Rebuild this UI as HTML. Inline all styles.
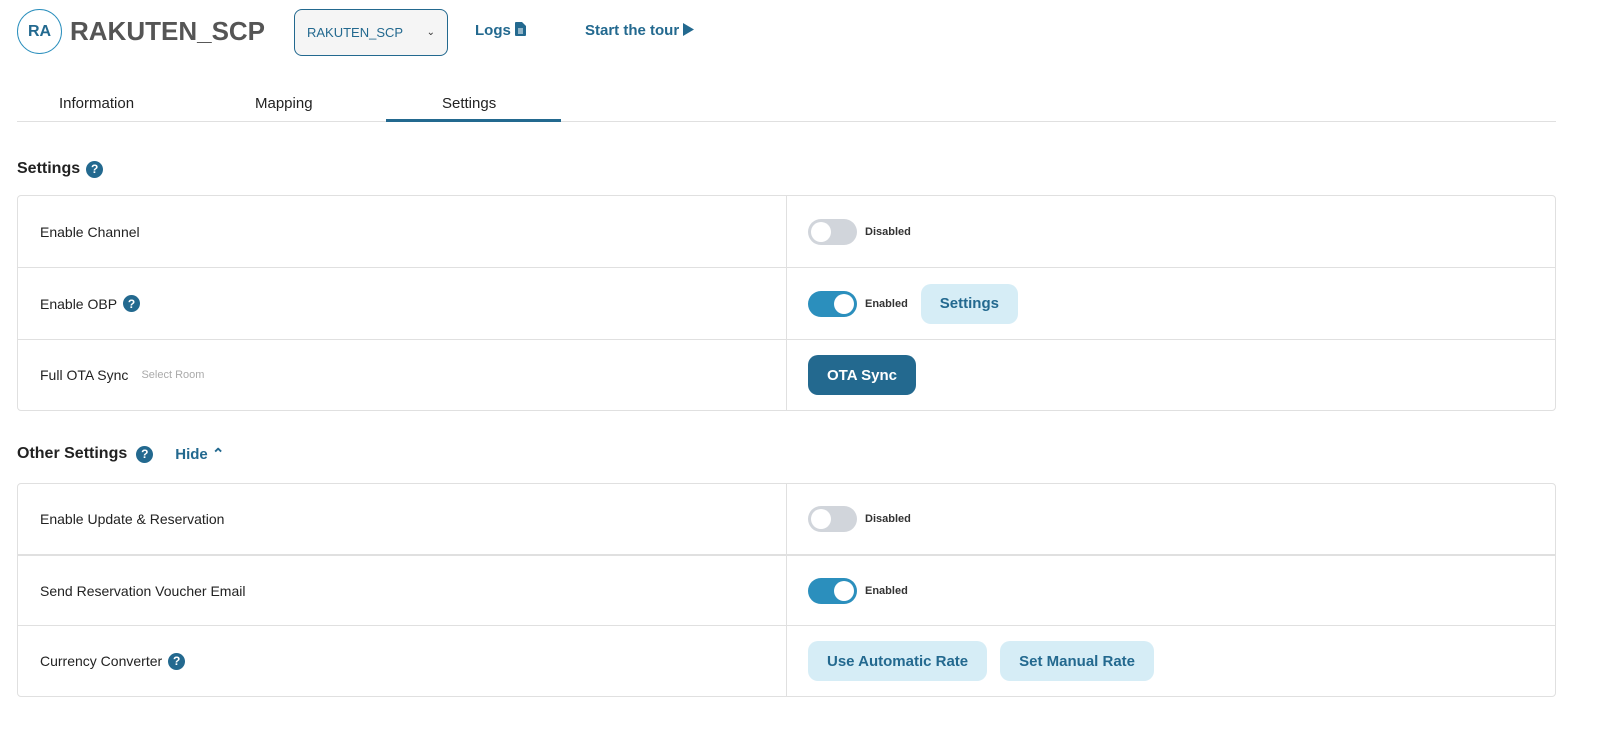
<!DOCTYPE html>
<html><head><style>
*{box-sizing:border-box;margin:0;padding:0}
body{width:1606px;height:738px;background:#fff;font-family:"Liberation Sans",sans-serif;color:#222;position:relative;overflow:hidden}
.abs{position:absolute}
.tbl{position:absolute;left:17px;width:1539px;border:1px solid #e0e0e0;border-radius:4px}
.row{position:relative;border-top:1px solid #e0e0e0;display:flex;align-items:center}
.row:first-child{border-top:none}
.row .l{width:769px;padding-left:22px;font-size:14px;color:#222;height:100%;display:flex;align-items:center;border-right:1px solid #e0e0e0}
.row .r{padding-left:21px;display:flex;align-items:center;height:100%}
.tog{width:49px;height:26px;border-radius:13px;position:relative;background:#d1d5db}
.tog::after{content:"";position:absolute;top:3px;left:3px;width:20px;height:20px;border-radius:50%;background:#fff}
.tog.on{background:#2b8fbd}
.tog.on::after{left:26px}
.st{font-size:11px;font-weight:bold;color:#333;margin-left:8px}
.q{display:inline-flex;width:17px;height:17px;border-radius:50%;background:#23698f;color:#fff;font-size:12px;font-weight:bold;align-items:center;justify-content:center;margin-left:6px}
.btnl{background:#d6edf6;color:#23698f;font-weight:bold;font-size:15px;border-radius:10px;height:40px;display:flex;align-items:center;padding:0 19px}
.h{font-size:16px;font-weight:bold;color:#222;display:flex;align-items:center}
</style></head><body>
<div class="abs" style="left:17px;top:9px;width:45px;height:45px;border:1.5px solid #2b8fbd;border-radius:50%;display:flex;align-items:center;justify-content:center;color:#23698f;font-weight:bold;font-size:16px">RA</div>
<div class="abs" style="left:70px;top:16px;font-size:26px;font-weight:bold;color:#555">RAKUTEN_SCP</div>
<div class="abs" style="left:294px;top:9px;width:154px;height:47px;border:1px solid #23698f;border-radius:8px;background:#f5f5f5;font-size:13px;color:#23698f;display:flex;align-items:center;padding-left:12px">RAKUTEN_SCP<span style="position:absolute;right:12px;font-size:10px;color:#333">&#8964;</span></div>
<div class="abs" style="left:475px;top:22px;font-size:15px;font-weight:bold;color:#23698f">Logs <svg width="11" height="14" viewBox="0 0 11 14" style="vertical-align:-1px"><path d="M0 1a1 1 0 0 1 1-1h6l4 4v9a1 1 0 0 1-1 1H1a1 1 0 0 1-1-1z" fill="#23698f"/><path d="M3 7h5M3 9h5M3 11h5" stroke="#fff" stroke-width="1"/></svg></div>
<div class="abs" style="left:585px;top:22px;font-size:15px;font-weight:bold;color:#23698f">Start the tour <svg width="11" height="13" viewBox="0 0 11 13" style="vertical-align:-1px"><path d="M0 0L11 6.5L0 13z" fill="#23698f"/></svg></div>
<div class="abs" style="left:59px;top:95px;font-size:15px">Information</div>
<div class="abs" style="left:255px;top:95px;font-size:15px">Mapping</div>
<div class="abs" style="left:442px;top:95px;font-size:15px">Settings</div>
<div class="abs" style="left:17px;top:121px;width:1539px;height:1px;background:#e0e0e0"></div>
<div class="abs" style="left:386px;top:119px;width:175px;height:3px;background:#23698f"></div>
<div class="abs h" style="left:17px;top:160px">Settings<span class="q">?</span></div>
<div class="tbl" style="top:195px">
 <div class="row" style="height:71px"><div class="l">Enable Channel</div><div class="r"><div class="tog"></div><span class="st">Disabled</span></div></div>
 <div class="row" style="height:72px"><div class="l">Enable OBP<span class="q">?</span></div><div class="r"><div class="tog on"></div><span class="st">Enabled</span><div class="btnl" style="margin-left:13px">Settings</div></div></div>
 <div class="row" style="height:71px"><div class="l">Full OTA Sync<span style="font-size:11px;color:#aaa;margin-left:13px">Select Room</span></div><div class="r"><div class="btnl" style="background:#23698f;color:#fff">OTA Sync</div></div></div>
</div>
<div class="abs h" style="left:17px;top:445px">Other Settings<span class="q" style="margin-left:9px">?</span><span style="color:#23698f;margin-left:22px;font-size:15px">Hide &#8963;</span></div>
<div class="tbl" style="top:483px">
 <div class="row" style="height:70px"><div class="l">Enable Update &amp; Reservation</div><div class="r"><div class="tog"></div><span class="st">Disabled</span></div></div>
 <div class="row" style="height:71px;border-top:2px solid #e0e0e0"><div class="l">Send Reservation Voucher Email</div><div class="r"><div class="tog on"></div><span class="st">Enabled</span></div></div>
 <div class="row" style="height:71px"><div class="l">Currency Converter<span class="q">?</span></div><div class="r"><div class="btnl">Use Automatic Rate</div><div class="btnl" style="margin-left:13px">Set Manual Rate</div></div></div>
</div>
</body></html>
